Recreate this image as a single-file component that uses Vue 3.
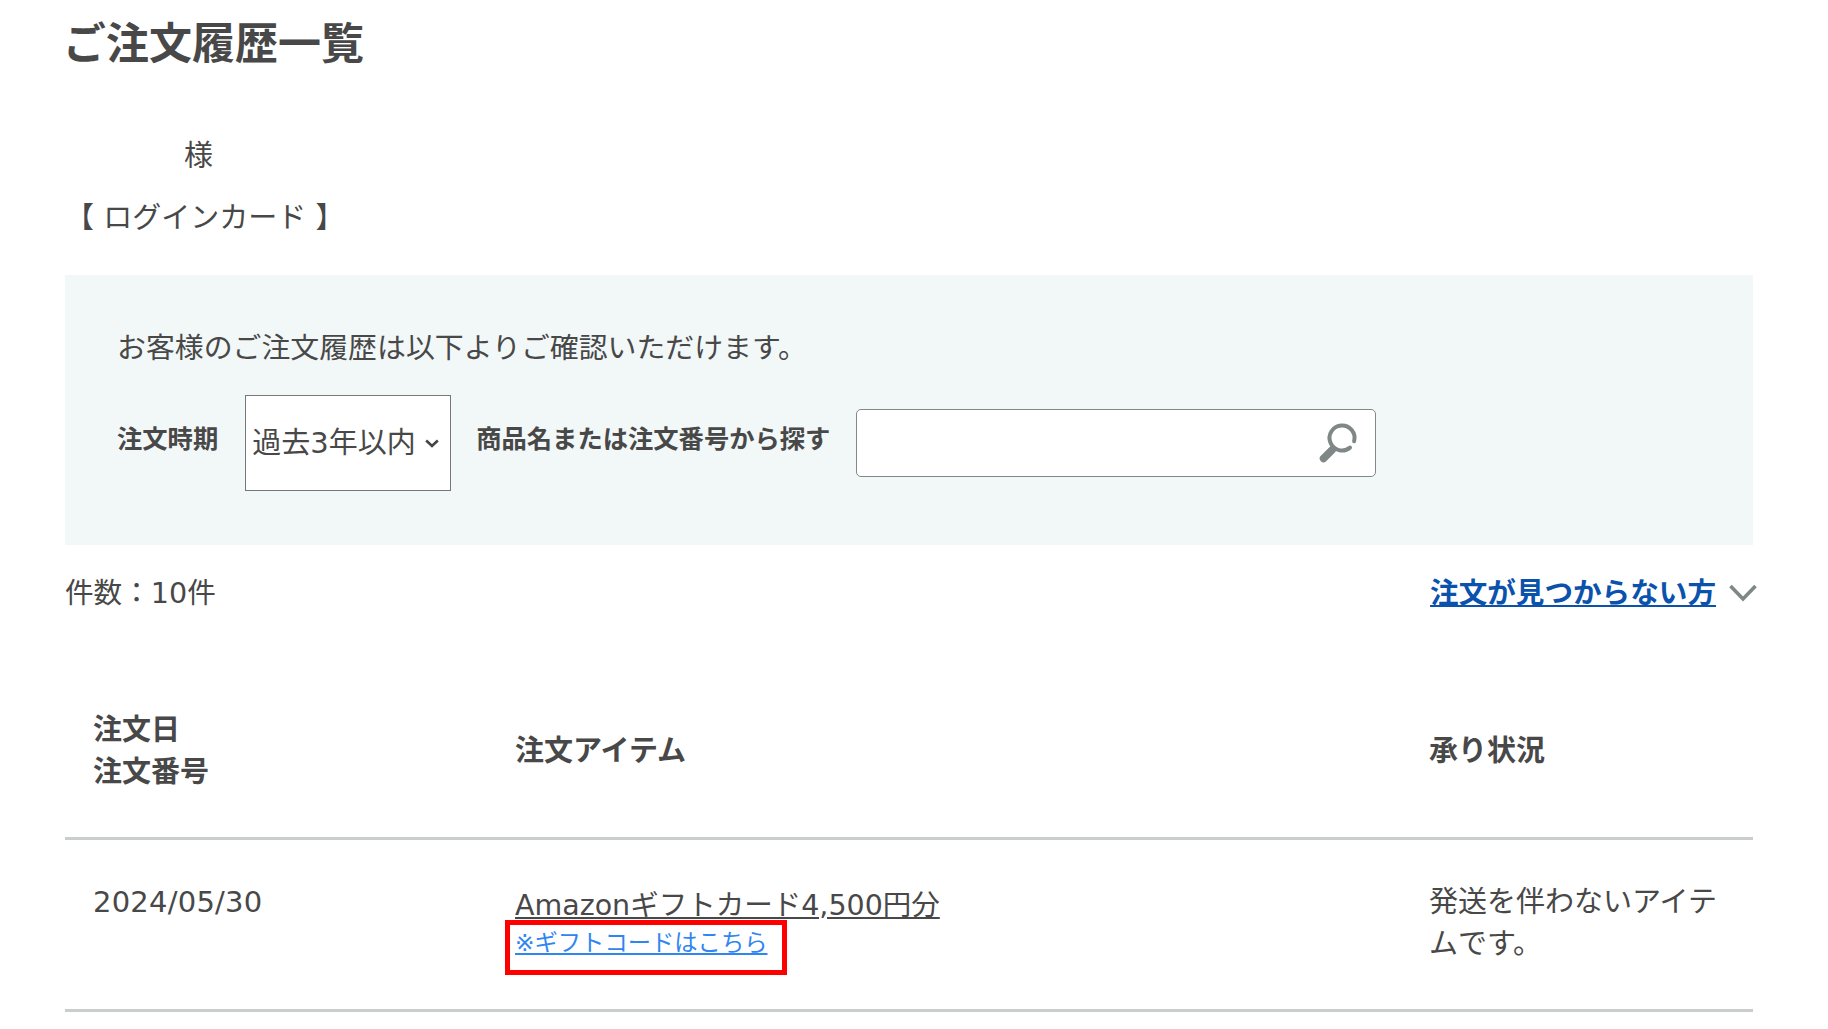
<script setup>
const orders = [
  {
    date: '2024/05/30',
    item: 'Amazonギフトカード4,500円分',
    gift: '※ギフトコードはこちら',
    status: '発送を伴わないアイテムです。'
  }
]
</script>

<template>
  <main class="page">
    <h1 class="title">ご注文履歴一覧</h1>
    <p class="customer">様</p>
    <p class="card">【 ログインカード 】</p>

    <section class="panel">
      <p class="intro">お客様のご注文履歴は以下よりご確認いただけます。</p>
      <div class="filters">
        <span class="label period">注文時期</span>
        <div class="select">
          <span>過去3年以内</span>
          <svg class="select-arrow" viewBox="0 0 14 9" width="14" height="9">
            <path d="M1.2 1.5 L7 7 L12.8 1.5" fill="none" stroke="#444" stroke-width="2.6" />
          </svg>
        </div>
        <span class="label keyword">商品名または注文番号から探す</span>
        <div class="search">
          <svg class="search-icon" viewBox="0 0 40 40" width="40" height="40">
            <path d="M36.1 18.2 A12.5 12.5 0 1 0 32 24.6" fill="none" stroke="#7f8787" stroke-width="4" stroke-linecap="round" />
            <path d="M14.5 26.5 L5.5 35.5" fill="none" stroke="#7f8787" stroke-width="7.5" stroke-linecap="round" />
          </svg>
        </div>
      </div>
    </section>

    <div class="summary">
      <span class="count">件数：10件</span>
      <a class="help" href="#">注文が見つからない方</a>
      <svg class="help-arrow" viewBox="0 0 28 18" width="28" height="18">
        <path d="M1.5 2 L14 15 L26.5 2" fill="none" stroke="#7f8787" stroke-width="3.6" />
      </svg>
    </div>

    <div class="table">
      <div class="row head">
        <div class="cell">注文日<br />注文番号</div>
        <div class="cell">注文アイテム</div>
        <div class="cell">承り状況</div>
      </div>
      <div v-for="o in orders" :key="o.date" class="row body">
        <div class="cell date">{{ o.date }}</div>
        <div class="cell item">
          <a class="item-name" href="#">{{ o.item }}</a>
          <span class="gift-box"><a class="gift" href="#">{{ o.gift }}</a></span>
        </div>
        <div class="cell">{{ o.status }}</div>
      </div>
    </div>
  </main>
</template>

<style>
html, body {
  margin: 0;
  background: #fff;
}
</style>

<style scoped>
.page {
  width: 1688px;
  height: 1016px;
  overflow: hidden;
  padding: 13px 75px 0 65px;
  font-family: "DejaVu Sans", "Noto Sans CJK JP", sans-serif;
  font-size: 29px;
  line-height: 42px;
  color: #484848;
}
.title {
  margin: 1px 0 0 -2px;
  font-size: 43px;
  line-height: 60px;
  font-weight: 700;
}
.customer {
  margin: 61px 0 0 119px;
}
.card {
  margin: 20px 0 0;
}
.panel {
  margin-top: 36px;
  height: 270px;
  box-sizing: border-box;
  padding: 52px 52px 0;
  background: #f2f7f7;
}
.intro {
  margin: 0;
  font-size: 28.9px;
}
.filters {
  display: flex;
  align-items: center;
  margin-top: 26px;
}
.label {
  font-size: 25.3px;
  font-weight: 700;
  position: relative;
  top: -3px;
}
.period {
  margin-right: 27px;
}
.select {
  width: 206px;
  height: 96px;
  box-sizing: border-box;
  padding: 0 11px 0 6px;
  display: flex;
  align-items: center;
  justify-content: space-between;
  border: 1px solid #777;
  background: #fff;
}
.keyword {
  margin: 0 26px 0 25px;
}
.search {
  width: 520px;
  height: 68px;
  box-sizing: border-box;
  display: flex;
  align-items: center;
  justify-content: flex-end;
  padding-right: 17px;
  border: 1px solid #808888;
  border-radius: 5px;
  background: #fff;
}
.summary {
  display: flex;
  align-items: center;
  margin-top: 27px;
  height: 42px;
}
.count {
  font-size: 28.6px;
}
.help {
  margin-left: auto;
  font-size: 28.6px;
  font-weight: 700;
  color: #0b52ad;
}
.help-arrow {
  margin: 0 -4px 0 13px;
}
.table {
  margin-top: 2px;
}
.row {
  display: grid;
  grid-template-columns: 422px 914px 352px;
}
.cell {
  padding: 0 28px;
}
.head {
  height: 224px;
  box-sizing: border-box;
  align-items: end;
  padding-bottom: 44px;
  font-weight: 700;
  border-bottom: 3px solid #c9cdcd;
}
.head .cell:not(:first-child) {
  padding-bottom: 21px;
}
.body {
  height: 172px;
  box-sizing: border-box;
  padding-top: 41px;
  border-bottom: 3px solid #c9cdcd;
}
.date {
  letter-spacing: 0.23px;
}
.item {
  position: relative;
}
.item-name {
  display: block;
  margin-top: 4px;
  font-size: 28.5px;
  color: #484848;
  text-decoration: underline;
}
.gift-box {
  position: absolute;
  left: 18px;
  top: 39px;
  width: 282px;
  height: 55px;
  box-sizing: border-box;
  padding: 0 0 0 5px;
  border: 5px solid #f00;
  line-height: 32px;
}
.gift {
  font-size: 23.3px;
  color: #2f86f0;
}
</style>
